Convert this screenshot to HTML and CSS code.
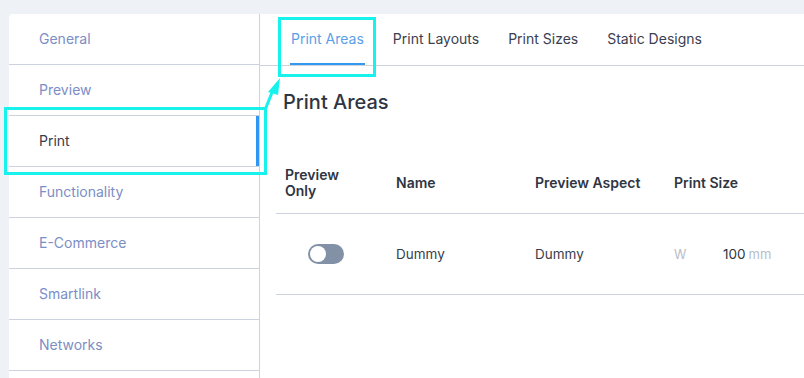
FILE: index.html
```html
<!DOCTYPE HTML>
<html>

<head>
    <title>Settings - Print</title>
    <meta name="viewport" content="width=device-width, initial-scale=1">
    <link rel="stylesheet" href="styles.css">
</head>

<body>
    <div class="layout">
        <div class="sidebar">
            <div class="side-item">General</div>
            <div class="side-item">Preview</div>
            <div class="side-item active">Print</div>
            <div class="side-item">Functionality</div>
            <div class="side-item">E-Commerce</div>
            <div class="side-item">Smartlink</div>
            <div class="side-item">Networks</div>
        </div>
        <div class="main">
            <div class="tabs">
                <div class="tab active">Print Areas</div>
                <div class="tab">Print Layouts</div>
                <div class="tab">Print Sizes</div>
                <div class="tab">Static Designs</div>
            </div>
            <div class="content">
                <h2>Print Areas</h2>
                <div class="table">
                    <div class="row head">
                        <div class="cell">Preview<br>Only</div>
                        <div class="cell">Name</div>
                        <div class="cell">Preview Aspect</div>
                        <div class="cell">Print Size</div>
                    </div>
                    <div class="row">
                        <div class="cell toggle-cell"><span class="toggle"><span class="knob"></span></span></div>
                        <div class="cell">Dummy</div>
                        <div class="cell">Dummy</div>
                        <div class="cell size">
                            <span class="size-label">W</span>
                            <span class="size-value">100</span>
                            <span class="size-unit">mm</span>
                        </div>
                    </div>
                </div>
            </div>
        </div>
    </div>

    <!-- annotation overlay -->
    <div class="mark mark-print"></div>
    <div class="mark mark-tab"></div>
    <svg class="mark-arrow" width="30" height="40" viewBox="0 0 30 40">
        <line x1="4" y1="34" x2="12" y2="14" stroke="#17f2ec" stroke-width="3" />
        <polygon points="19,2 7,16 17,19" fill="#17f2ec" />
    </svg>
</body>

</html>
```

FILE: styles.css
```css
html {
    font-family: Inter, "Noto Sans", sans-serif;
}

body {
    margin: 0;
    background-color: #eef1f5;
    position: relative;
    height: 378px;
    overflow: hidden;
}

.layout {
    display: flex;
    padding: 14px 0 0 9px;
    height: 364px;
}

.sidebar {
    width: 250px;
    background-color: #fff;
    border-right: 1px solid #ccd3de;
    border-top-left-radius: 4px;
}

.side-item {
    border-bottom: 1px solid #ccd3de;
    display: flex;
    align-items: center;
    padding-left: 30px;
    padding-bottom: 1px;
    box-sizing: border-box;
    height: 51px;
    font-size: 14px;
    color: #7b8ec6;
}

.side-item.active {
    color: #383d4b;
    box-shadow: inset -3px 0 #2f96f5;
}

.main {
    flex: 1;
    background-color: #fff;
}

.tabs {
    display: flex;
    gap: 27px;
    height: 51px;
    padding-left: 30px;
    border-bottom: 1px solid #ccd3de;
}

.tab {
    display: flex;
    align-items: center;
    font-size: 14px;
    color: #3b4050;
    padding: 0 1px;
    border-bottom: 2px solid transparent;
}

.tab.active {
    color: #5a9fe8;
    border-bottom-color: #3398f0;
}

.content {
    padding-left: 16px;
}

h2 {
    margin: 24px 0 0 7px;
    font-size: 20px;
    line-height: 24px;
    font-weight: 500;
    color: #2f3542;
}

.table {
    margin-top: 39px;
}

.row {
    display: grid;
    grid-template-columns: 111px 139px 139px 1fr;
    padding-left: 9px;
    align-items: center;
    border-bottom: 1px solid #ccd3de;
    height: 80px;
    font-size: 13.5px;
    color: #383d4b;
}

.row.head {
    height: 60px;
    font-weight: 600;
    font-size: 14px;
    line-height: 16px;
    color: #2f3542;
}

.toggle-cell {
    padding-left: 23px;
}

.toggle {
    display: block;
    width: 36px;
    height: 20px;
    border-radius: 10px;
    background-color: #8391a7;
    position: relative;
}

.knob {
    position: absolute;
    left: 2px;
    top: 2px;
    width: 16px;
    height: 16px;
    border-radius: 50%;
    background-color: #fff;
}

.size {
    display: flex;
    align-items: baseline;
}

.size-label {
    width: 49px;
    font-size: 12.5px;
    color: #b6bdca;
}

.size-value {
    color: #2f3542;
}

.size-unit {
    margin-left: 3px;
    font-size: 13px;
    color: #b6bdca;
}

.mark {
    position: absolute;
    border: 3px solid #17f2ec;
    box-sizing: border-box;
}

.mark-print {
    left: 4px;
    top: 107px;
    width: 263px;
    height: 68px;
}

.mark-tab {
    left: 278px;
    top: 17px;
    width: 98px;
    height: 60px;
}

.mark-arrow {
    position: absolute;
    left: 261px;
    top: 76px;
}
```
